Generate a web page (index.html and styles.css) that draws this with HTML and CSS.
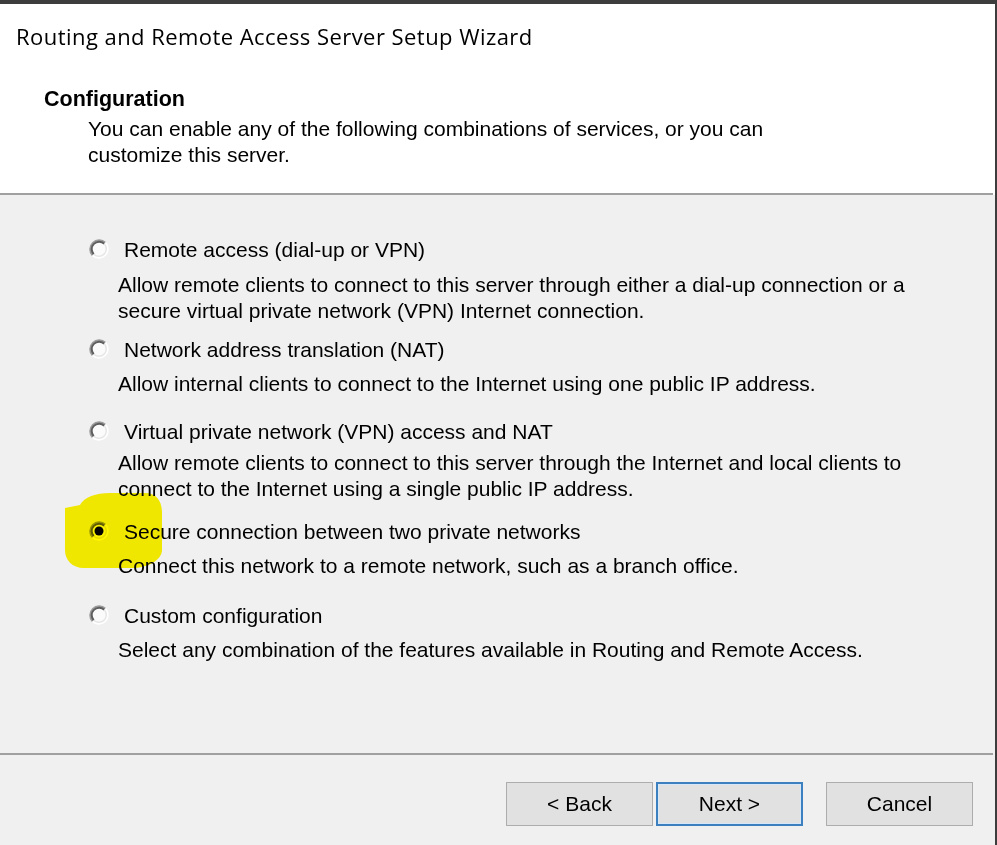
FILE: index.html
```html
<!DOCTYPE html>
<html lang="en">
<head>
<meta charset="utf-8">
<title>Routing and Remote Access Server Setup Wizard</title>
<link rel="stylesheet" href="styles.css">
</head>
<body>
<div class="window">
  <header class="header">
    <div class="title">Routing and Remote Access Server Setup Wizard</div>
    <div class="heading">Configuration</div>
    <div class="subtitle">You can enable any of the following combinations of services, or you can<br>customize this server.</div>
  </header>
  <div class="sep sep-top"></div>
  <main class="body">
    <div class="option opt-1">
      <div class="opt-label">
        <svg class="radio" width="20" height="20" viewBox="0 0 20 20"><circle cx="10" cy="10" r="9" fill="#fbfbfb"/><path d="M3.64 16.36 A9 9 0 0 1 16.36 3.64" fill="none" stroke="#9a9a9a" stroke-width="2"/><path d="M4.7 15.3 A7.5 7.5 0 0 1 15.3 4.7" fill="none" stroke="#5e5e5e" stroke-width="2"/><path d="M16.36 3.64 A9 9 0 0 1 3.64 16.36" fill="none" stroke="#ffffff" stroke-width="2"/><path d="M15.3 4.7 A7.5 7.5 0 0 1 4.7 15.3" fill="none" stroke="#e6e6e6" stroke-width="1.5"/></svg>
        <span>Remote access (dial-up or VPN)</span>
      </div>
      <div class="desc d-1">Allow remote clients to connect to this server through either a dial-up connection or a<br>secure virtual private network (VPN) Internet connection.</div>
    </div>
    <div class="option opt-2">
      <div class="opt-label">
        <svg class="radio" width="20" height="20" viewBox="0 0 20 20"><circle cx="10" cy="10" r="9" fill="#fbfbfb"/><path d="M3.64 16.36 A9 9 0 0 1 16.36 3.64" fill="none" stroke="#9a9a9a" stroke-width="2"/><path d="M4.7 15.3 A7.5 7.5 0 0 1 15.3 4.7" fill="none" stroke="#5e5e5e" stroke-width="2"/><path d="M16.36 3.64 A9 9 0 0 1 3.64 16.36" fill="none" stroke="#ffffff" stroke-width="2"/><path d="M15.3 4.7 A7.5 7.5 0 0 1 4.7 15.3" fill="none" stroke="#e6e6e6" stroke-width="1.5"/></svg>
        <span>Network address translation (NAT)</span>
      </div>
      <div class="desc d-2">Allow internal clients to connect to the Internet using one public IP address.</div>
    </div>
    <div class="option opt-3">
      <div class="opt-label">
        <svg class="radio" width="20" height="20" viewBox="0 0 20 20"><circle cx="10" cy="10" r="9" fill="#fbfbfb"/><path d="M3.64 16.36 A9 9 0 0 1 16.36 3.64" fill="none" stroke="#9a9a9a" stroke-width="2"/><path d="M4.7 15.3 A7.5 7.5 0 0 1 15.3 4.7" fill="none" stroke="#5e5e5e" stroke-width="2"/><path d="M16.36 3.64 A9 9 0 0 1 3.64 16.36" fill="none" stroke="#ffffff" stroke-width="2"/><path d="M15.3 4.7 A7.5 7.5 0 0 1 4.7 15.3" fill="none" stroke="#e6e6e6" stroke-width="1.5"/></svg>
        <span>Virtual private network (VPN) access and NAT</span>
      </div>
      <div class="desc d-3">Allow remote clients to connect to this server through the Internet and local clients to<br>connect to the Internet using a single public IP address.</div>
    </div>
    <div class="option opt-4">
      <svg class="highlight" width="110" height="85" viewBox="0 0 110 85"><path d="M5 20 L20 17 C24 9 36 5 50 5 L85 5 C98 5 102 15 102 25 L102 62 C102 72 88 80 72 80 L24 80 C12 80 5 72 5 62 Z" fill="#fff600"/></svg>
      <div class="opt-label">
        <svg class="radio" width="20" height="20" viewBox="0 0 20 20"><circle cx="10" cy="10" r="9" fill="#fbfbfb"/><path d="M3.64 16.36 A9 9 0 0 1 16.36 3.64" fill="none" stroke="#9a9a9a" stroke-width="2"/><path d="M4.7 15.3 A7.5 7.5 0 0 1 15.3 4.7" fill="none" stroke="#5e5e5e" stroke-width="2"/><path d="M16.36 3.64 A9 9 0 0 1 3.64 16.36" fill="none" stroke="#ffffff" stroke-width="2"/><path d="M15.3 4.7 A7.5 7.5 0 0 1 4.7 15.3" fill="none" stroke="#e6e6e6" stroke-width="1.5"/><circle cx="10" cy="10" r="4.5" fill="#000"/></svg>
        <span>Secure connection between two private networks</span>
      </div>
      <div class="desc d-4">Connect this network to a remote network, such as a branch office.</div>
    </div>
    <div class="option opt-5">
      <div class="opt-label">
        <svg class="radio" width="20" height="20" viewBox="0 0 20 20"><circle cx="10" cy="10" r="9" fill="#fbfbfb"/><path d="M3.64 16.36 A9 9 0 0 1 16.36 3.64" fill="none" stroke="#9a9a9a" stroke-width="2"/><path d="M4.7 15.3 A7.5 7.5 0 0 1 15.3 4.7" fill="none" stroke="#5e5e5e" stroke-width="2"/><path d="M16.36 3.64 A9 9 0 0 1 3.64 16.36" fill="none" stroke="#ffffff" stroke-width="2"/><path d="M15.3 4.7 A7.5 7.5 0 0 1 4.7 15.3" fill="none" stroke="#e6e6e6" stroke-width="1.5"/></svg>
        <span>Custom configuration</span>
      </div>
      <div class="desc d-5">Select any combination of the features available in Routing and Remote Access.</div>
    </div>
  </main>
  <div class="sep sep-bottom"></div>
  <footer class="footer">
    <button class="btn">&lt; Back</button>
    <button class="btn btn-default">Next &gt;</button>
    <button class="btn btn-cancel">Cancel</button>
  </footer>
</div>
</body>
</html>
```
FILE: styles.css
```css
html, body {
  margin: 0;
  padding: 0;
}
body {
  background: #3d3d3d;
  padding-top: 4px;
  padding-right: 2px;
  height: 845px;
  box-sizing: border-box;
  overflow: hidden;
  font-family: "Liberation Sans", Arial, sans-serif;
  color: #000;
}
.window {
  width: 995px;
  height: 841px;
  display: flex;
  flex-direction: column;
  background: #f0f0f0;
}
.header {
  background: #fff;
  height: 189px;
  box-sizing: border-box;
  padding: 17px 0 0 16px;
}
.title {
  font-family: "Open Sans", "Noto Sans", sans-serif;
  font-size: 22px;
  letter-spacing: 0.45px;
  line-height: 30px;
  color: #000;
}
.heading {
  font-weight: bold;
  font-size: 21.5px;
  line-height: 26px;
  margin-top: 35px;
  padding-left: 28px;
}
.subtitle {
  font-size: 21px;
  line-height: 26px;
  margin-top: 4px;
  padding-left: 72px;
}
.sep {
  height: 2px;
  background: #a0a0a0;
  width: 993px;
}
.sep-top {
  box-shadow: 2px 0 0 #fff;
}
.body {
  height: 558px;
  box-sizing: border-box;
  padding-top: 42px;
  font-size: 21px;
  line-height: 26px;
}
.option {
  position: relative;
}
.opt-label {
  display: flex;
  align-items: center;
  gap: 15px;
  padding-left: 89px;
  height: 26px;
  position: relative;
}
.radio {
  flex: none;
  display: block;
  margin-top: -2px;
}
.desc {
  padding-left: 118px;
  position: relative;
}
.d-1 { margin-top: 9px; }
.opt-2 { margin-top: 13px; }
.d-2 { margin-top: 8px; }
.opt-3 { margin-top: 22px; }
.d-3 { margin-top: 5px; }
.opt-4 { margin-top: 17px; }
.d-4 { margin-top: 8px; }
.opt-5 { margin-top: 24px; }
.d-5 { margin-top: 8px; }
.highlight {
  position: absolute;
  left: 60px;
  top: -31px;
  mix-blend-mode: multiply;
  z-index: 2;
  pointer-events: none;
}
.footer {
  flex: 1;
  display: flex;
  align-items: flex-start;
  padding-top: 27px;
  padding-left: 506px;
}
.btn {
  width: 147px;
  height: 44px;
  box-sizing: border-box;
  background: #e1e1e1;
  border: 1px solid #adadad;
  font-family: "Liberation Sans", Arial, sans-serif;
  font-size: 21px;
  color: #000;
  padding: 0;
  margin: 0;
}
.btn-default {
  margin-left: 3px;
  border: 2px solid #3c80c0;
  box-shadow: inset 0 0 0 1px #d6e8f7;
}
.btn-cancel {
  margin-left: 23px;
}
```
